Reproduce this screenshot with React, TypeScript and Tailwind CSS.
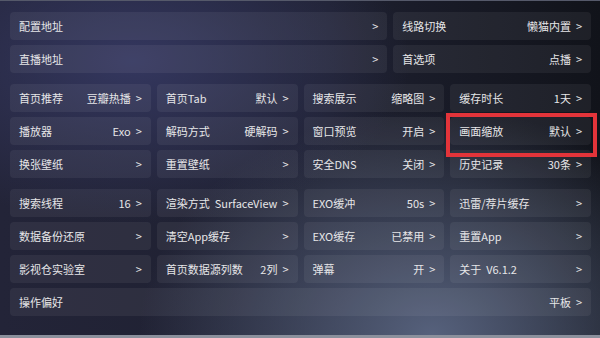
import React from "react";

type Item = { label: string; value?: string };

const group2: Item[][] = [
  [
    { label: "首页推荐", value: "豆瓣热播" },
    { label: "首页Tab", value: "默认" },
    { label: "搜索展示", value: "缩略图" },
    { label: "缓存时长", value: "1天" },
  ],
  [
    { label: "播放器", value: "Exo" },
    { label: "解码方式", value: "硬解码" },
    { label: "窗口预览", value: "开启" },
    { label: "画面缩放", value: "默认" },
  ],
  [
    { label: "换张壁纸" },
    { label: "重置壁纸" },
    { label: "安全DNS", value: "关闭" },
    { label: "历史记录", value: "30条" },
  ],
];

const group3: Item[][] = [
  [
    { label: "搜索线程", value: "16" },
    { label: "渲染方式", value: "SurfaceView" },
    { label: "EXO缓冲", value: "50s" },
    { label: "迅雷/荐片缓存" },
  ],
  [
    { label: "数据备份还原" },
    { label: "清空App缓存" },
    { label: "EXO缓存", value: "已禁用" },
    { label: "重置App" },
  ],
  [
    { label: "影视仓实验室" },
    { label: "首页数据源列数", value: "2列" },
    { label: "弹幕", value: "开" },
    { label: "关于  V6.1.2" },
  ],
];

function Card({ label, value, className = "" }: Item & { className?: string }) {
  return (
    <div
      className={`h-[28px] flex items-center justify-between rounded-[4px] bg-white/[0.06] pl-[9px] pr-[9px] ${className}`}
    >
      <span className="whitespace-pre">{label}</span>
      <span className="flex items-center gap-[5px]">
        {value && <span>{value}</span>}
        <span>&gt;</span>
      </span>
    </div>
  );
}

export default function App() {
  return (
    <div
      className="relative w-[600px] h-[338px] overflow-hidden text-[11px] leading-none text-[#e6e6e8] border-t border-[#55596a] border-b-[3px] border-b-[#8b909c] bg-[radial-gradient(ellipse_at_22%_18%,#34375f_0%,rgba(52,55,95,0)_42%),radial-gradient(ellipse_at_72%_100%,#56617c_0%,rgba(86,97,124,0)_48%),linear-gradient(90deg,#232438_0%,#1e2030_55%,#11131a_100%)]"
      style={{ fontFamily: '"Noto Sans CJK SC", "Noto Sans", sans-serif' }}
    >
      <div className="flex flex-col gap-[11px] pl-[10px] pr-[9px] pt-[11px]">
        <div className="flex flex-col gap-[5px]">
          <div className="flex gap-[6px]">
            <Card label="配置地址" className="flex-[2]" />
            <Card label="线路切换" value="懒猫内置" className="flex-1" />
          </div>
          <div className="flex gap-[6px]">
            <Card label="直播地址" className="flex-[2]" />
            <Card label="首选项" value="点播" className="flex-1" />
          </div>
        </div>
        <div className="flex flex-col gap-[5px]">
          {group2.map((row, i) => (
            <div key={i} className="grid grid-cols-4 gap-[6px]">
              {row.map((it) => (
                <Card key={it.label} {...it} />
              ))}
            </div>
          ))}
        </div>
        <div className="flex flex-col gap-[5px]">
          {group3.map((row, i) => (
            <div key={i} className="grid grid-cols-4 gap-[6px]">
              {row.map((it) => (
                <Card key={it.label} {...it} />
              ))}
            </div>
          ))}
          <Card label="操作偏好" value="平板" />
        </div>
      </div>
      <div className="absolute left-[446px] top-[112px] w-[151px] h-[44px] border-[4px] border-[#e3343a]" />
    </div>
  );
}
